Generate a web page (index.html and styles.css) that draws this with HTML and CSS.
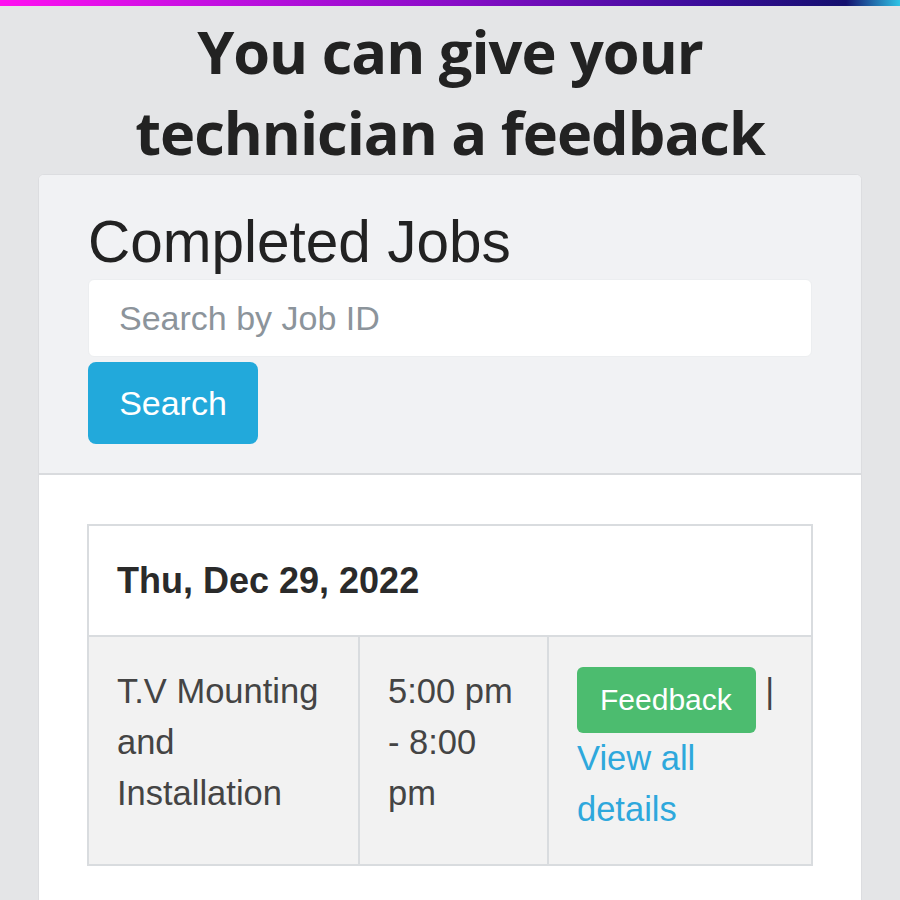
FILE: index.html
```html
<!DOCTYPE html>
<html>
<head>
<meta charset="utf-8">
<link rel="stylesheet" href="styles.css">
</head>
<body>
<div class="topbar"></div>
<h1 class="title">You can give your<br>technician a feedback</h1>
<div class="card">
  <div class="card-header">
    <h2 class="card-title">Completed Jobs</h2>
    <input class="search-input" type="text" placeholder="Search by Job ID">
    <button class="btn-search">Search</button>
  </div>
  <div class="card-body">
    <table class="jobs">
      <colgroup>
        <col class="col1">
        <col class="col2">
        <col class="col3">
      </colgroup>
      <thead>
        <tr><th colspan="3">Thu, Dec 29, 2022</th></tr>
      </thead>
      <tbody>
        <tr>
          <td>T.V Mounting and Installation</td>
          <td>5:00 pm - 8:00 pm</td>
          <td><span class="btn-feedback">Feedback</span> | <a class="details" href="#">View all details</a></td>
        </tr>
      </tbody>
    </table>
  </div>
</div>
</body>
</html>
```
FILE: styles.css
```css
html, body {
  margin: 0;
  padding: 0;
}
body {
  background: #e4e5e7;
  font-family: "Liberation Sans", Arial, sans-serif;
  color: #333;
  height: 900px;
  overflow: hidden;
}
.topbar {
  height: 6px;
  background: linear-gradient(90deg, #ff10f0 0%, #c010e0 25%, #8a0cc8 50%, #3a0c9a 78%, #14106e 94%, #2ec4e6 100%);
}
.title {
  margin: 4px 0 0;
  padding-bottom: 2px;
  text-align: center;
  font-family: "Open Sans", sans-serif;
  font-weight: 700;
  font-size: 59.5px;
  line-height: 81px;
  color: #222;
  letter-spacing: -1px;
}
.card {
  margin: 0 38px;
  background: #fff;
  border: 1px solid #dcdde0;
  border-radius: 6px;
  overflow: hidden;
  height: 760px;
}
.card-header {
  background: #f1f2f4;
  border-bottom: 2px solid #d9dbde;
  padding: 34px 49px 29px;
}
.card-title {
  margin: 0 0 4px;
  font-weight: 400;
  font-size: 58.5px;
  line-height: 66px;
  color: #222;
}
.search-input {
  display: block;
  box-sizing: border-box;
  width: 100%;
  height: 78px;
  border: 1px solid #eceef0;
  border-radius: 6px;
  background: #fff;
  padding: 0 30px;
  font-family: inherit;
  font-size: 34px;
  color: #555;
  outline: none;
}
.search-input::placeholder {
  color: #8c949b;
}
.btn-search {
  display: block;
  margin-top: 5px;
  width: 170px;
  height: 82px;
  border: none;
  border-radius: 8px;
  background: #22a9db;
  color: #fff;
  font-family: inherit;
  font-size: 34px;
  padding: 0;
}
.card-body {
  padding: 49px 48px;
}
.jobs {
  width: 100%;
  table-layout: fixed;
  border-collapse: collapse;
  font-size: 34.5px;
  line-height: 51px;
}
.col1 { width: 271px; }
.col2 { width: 189px; }
.jobs th, .jobs td {
  border: 2px solid #d9dcdf;
  padding: 29px 28px;
  text-align: left;
  vertical-align: top;
}
.jobs th {
  background: #fff;
  font-weight: 700;
  font-size: 36px;
  color: #2a2a2a;
}
.jobs td {
  background: #f2f2f2;
  color: #444;
}
.btn-feedback {
  display: inline-block;
  vertical-align: top;
  background: #4cbc6f;
  color: #fff;
  font-size: 30px;
  line-height: 66px;
  padding: 0 24px 0 23px;
  border-radius: 6px;
  margin-top: 1px;
}
.details {
  color: #2ea8dc;
  text-decoration: none;
}
```
